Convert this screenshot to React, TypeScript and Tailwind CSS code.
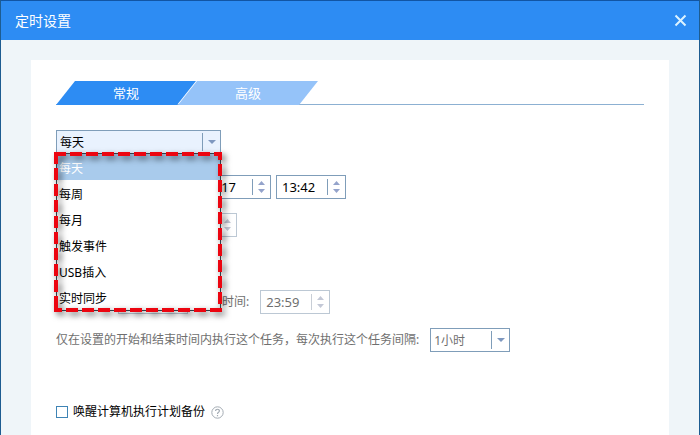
import React, { useState } from 'react';

interface TimeBoxProps {
  id: string;
  label: string;
  value: string;
  className: string;
  disabled?: boolean;
}

const TimeBox: React.FC<TimeBoxProps> = ({ id, label, value, className, disabled }) => {
  const [text, setText] = useState(value);

  return (
    <div
      className={`flex h-6 items-center border bg-white ${
        disabled ? 'border-[#bcc8d4] text-[#6f6f6f]' : 'border-[#7f9db9] text-black'
      } ${className}`}
    >
      <input
        id={id}
        aria-label={label}
        value={text}
        disabled={disabled}
        onChange={(e) => setText(e.target.value)}
        className="w-0 min-w-0 flex-1 pl-[5px] text-[13px] leading-5 outline-none"
      />
      <div
        className={`flex h-4 w-[18px] flex-col items-center justify-between border-l ${
          disabled ? 'border-[#c8ced6] text-[#c3c8d6]' : 'border-[#7f9db9] text-[#94a3cb]'
        }`}
      >
        <button type="button" aria-label={`${label} +`} disabled={disabled} className="flex h-2 items-center">
          <svg width="7" height="4" viewBox="0 0 7 4" className="block">
            <path d="M0 4 3.5 0 7 4Z" fill="currentColor" />
          </svg>
        </button>
        <button type="button" aria-label={`${label} -`} disabled={disabled} className="flex h-2 items-center">
          <svg width="7" height="4" viewBox="0 0 7 4" className="block">
            <path d="M0 0 3.5 4 7 0Z" fill="currentColor" />
          </svg>
        </button>
      </div>
    </div>
  );
};

interface DropDownProps {
  id: string;
  label: string;
  options: string[];
  value: string;
  onChange: (value: string) => void;
  className: string;
}

const DropDown: React.FC<DropDownProps> = ({ id, label, options, value, onChange, className }) => (
  <div className={`relative h-6 border border-[#7f9db9] ${className}`}>
    <select
      id={id}
      aria-label={label}
      value={value}
      onChange={(e) => onChange(e.target.value)}
      className="block h-full w-full appearance-none pt-0.5 pl-[3px] outline-none"
    >
      {options.map((option) => (
        <option key={option}>{option}</option>
      ))}
    </select>
    <span className="pointer-events-none absolute inset-y-0.5 right-0 flex w-[18px] items-center justify-center border-l border-[#7f9db9]">
      <svg width="8" height="4" viewBox="0 0 8 4" className="block">
        <path d="M0 0 4 4 8 0Z" fill="#7f98bf" />
      </svg>
    </span>
  </div>
);

const schedules = ['每天', '每周', '每月', '触发事件', 'USB插入', '实时同步'];

const App: React.FC = () => {
  const [schedule, setSchedule] = useState('每天');
  const [interval, setInterval] = useState('1小时');
  const [tab, setTab] = useState('常规');
  const [wake, setWake] = useState(false);

  return (
    <div className="flex min-h-screen flex-col border-x border-[#1d5c91] bg-[#eff5f9] font-['Noto_Sans','Noto_Sans_CJK_SC',sans-serif] text-xs text-black">
      <header className="flex h-10 items-center justify-between border-t border-[#1155a4] bg-[#2d8cf3] pr-3 pl-[14px] text-white">
        <h1 className="text-sm leading-5">定时设置</h1>
        <button type="button" aria-label="关闭">
          <svg width="13" height="13" viewBox="0 0 13 13" className="block">
            <path d="M1.5 1.5 11.5 11.5M11.5 1.5 1.5 11.5" stroke="#dcf3ff" strokeWidth="2" />
          </svg>
        </button>
      </header>

      <main className="mx-[30px] mt-5 flex-1 bg-white px-[25px] pt-[21px]">
        <div role="tablist" className="flex h-6 border-b border-[#8cb0d2]">
          {['常规', '高级'].map((name) => (
            <button
              key={name}
              type="button"
              role="tab"
              aria-selected={tab === name}
              onClick={() => setTab(name)}
              className={`-mr-[18px] h-6 w-[140px] text-[13px] leading-6 text-white [clip-path:polygon(19px_0,100%_0,calc(100%_-_19px)_100%,0_100%)] ${
                tab === name ? 'bg-[#2d8cf3]' : 'bg-[#95c3f9]'
              }`}
            >
              {name}
            </button>
          ))}
        </div>

        <form className="flex flex-col">
          <div className="relative mt-[25px] w-[165px]">
            <DropDown
              id="schedule"
              label="计划类型"
              options={schedules}
              value={schedule}
              onChange={setSchedule}
              className="w-full bg-[#e9f2fe]"
            />
            <ul
              role="listbox"
              aria-label="计划类型"
              className="absolute inset-x-0 top-[23px] z-10 border border-[#3d4650] bg-white"
            >
              {schedules.map((name) => (
                <li
                  key={name}
                  role="option"
                  aria-selected={name === schedule}
                  onClick={() => setSchedule(name)}
                  className={`h-[26px] pt-0.5 pl-0.5 leading-[26px] ${
                    name === schedule ? 'bg-[#a9cbec] text-white' : 'text-black'
                  }`}
                >
                  {name}
                </li>
              ))}
            </ul>
            <svg
              width="168"
              height="160"
              viewBox="0 0 168 160"
              className="pointer-events-none absolute top-[22px] -left-0.5 z-20 overflow-visible drop-shadow-[3px_3px_3px_rgba(0,0,0,0.6)]"
            >
              <path d="M0 2H166V158H0M2 0V160" fill="none" stroke="#ec0510" strokeWidth="4" strokeDasharray="12 4" />
            </svg>
          </div>

          <div className="mt-[21px] ml-[62px] flex items-center gap-[5px]">
            <TimeBox id="start-date" label="开始日期" value="17" className="w-[153px] [&_input]:pr-4 [&_input]:text-right" />
            <TimeBox id="start-time" label="开始时刻" value="13:42" className="w-[70px]" />
          </div>

          <div className="mt-[14px] ml-[62px] flex items-center">
            <TimeBox id="repeat" label="间隔" value="" className="w-[119px]" disabled />
          </div>

          <div className="mt-[53px] ml-[62px] flex items-center text-[#6f6f6f]">
            <TimeBox id="from" label="开始时间" value="" className="w-[70px]" disabled />
            <label htmlFor="to" className="mr-[11px] ml-[34px] leading-5">时间:</label>
            <TimeBox id="to" label="结束时间" value="23:59" className="w-[70px]" disabled />
          </div>

          <div className="mt-[14px] flex items-center gap-[11px] text-[#6f6f6f]">
            <label htmlFor="interval" className="leading-5">
              仅在设置的开始和结束时间内执行这个任务，每次执行这个任务间隔:
            </label>
            <DropDown
              id="interval"
              label="任务间隔"
              options={['1小时', '2小时', '4小时']}
              value={interval}
              onChange={setInterval}
              className="w-20"
            />
          </div>

          <div className="mt-[50px] flex items-center">
            <input
              id="wake"
              type="checkbox"
              checked={wake}
              onChange={(e) => setWake(e.target.checked)}
              className="size-3 appearance-none border border-[#3f84b5] bg-white checked:bg-[#2d8cf3]"
            />
            <label htmlFor="wake" className="ml-[5px] leading-5">唤醒计算机执行计划备份</label>
            <button type="button" aria-label="帮助" className="ml-1.5">
              <svg width="13" height="13" viewBox="0 0 13 13" fill="none" stroke="#a3abb3" className="block">
                <circle cx="6.5" cy="6.5" r="5.7" />
                <path d="M4.6 5.1C4.6 2.6 8.5 2.7 8.4 5 8.3 6.3 6.5 6.3 6.5 7.9M6.5 9V10.2" strokeWidth="1.2" />
              </svg>
            </button>
          </div>
        </form>
      </main>
    </div>
  );
};

export default App;
